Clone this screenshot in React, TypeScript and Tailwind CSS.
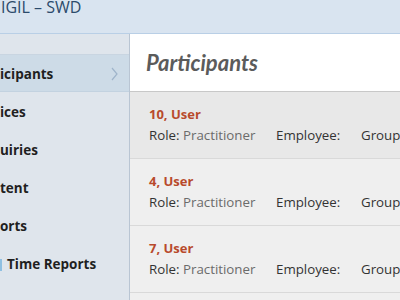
import React from 'react';

const navItems = ['ices', 'uiries', 'tent', 'orts'];

const participants = [
  { name: '10, User', active: true },
  { name: '4, User', active: false },
  { name: '7, User', active: false },
];

export default function App() {
  return (
    <div className="w-[400px] h-[300px] overflow-hidden flex flex-col bg-[#dfe5ec] font-['Open_Sans',sans-serif]">
      {/* 상단 헤더 */}
      <div className="h-[34px] shrink-0 bg-[#d9e4f0] border-b border-[#b9cfe6] overflow-hidden">
        <div className="-mt-[4px] pl-[1px] text-[16px] leading-[22px] text-[#2b4a6b]">IGIL – SWD</div>
      </div>

      <div className="flex flex-1 min-h-0">
        {/* 사이드바 */}
        <div className="w-[130px] shrink-0 bg-[#dfe5ec] border-r border-[#b9c5d3]">
          <div className="h-[21px] border-b border-[#c9d5e1]" />
          <div className="h-[37px] pt-[2px] bg-[#cddbe7] border-b border-[#c3d2e0] flex items-center justify-between pr-[11px]">
            <span className="text-[13.5px] font-bold text-[#1f1f1f]">icipants</span>
            <svg width="7" height="14" viewBox="0 0 7 14" fill="none">
              <path d="M1 1l5 6-5 6" stroke="#9fb4ca" strokeWidth="1.2" />
            </svg>
          </div>
          {navItems.map((item) => (
            <div key={item} className="h-[38px] pt-[3px] flex items-center">
              <span className="text-[13.5px] font-bold text-[#1f1f1f]">{item}</span>
            </div>
          ))}
          <div className="h-[38px] pt-[3px] flex items-center">
            <span className="w-[2px] h-[12px] bg-[#8fc0e2] mr-[5px]" />
            <span className="text-[13.5px] font-bold text-[#1f1f1f]">Time Reports</span>
          </div>
        </div>

        {/* 본문 */}
        <div className="flex-1 flex flex-col bg-[#efefef]">
          <div className="h-[58px] shrink-0 bg-white border-b border-[#c8c8c8] flex items-center pl-[16px]">
            <h1 className="font-['Lato',sans-serif] italic font-bold text-[22px] text-[#5b5b5b]">Participants</h1>
          </div>
          {participants.map((p) => (
            <div
              key={p.name}
              className={`h-[67px] shrink-0 border-b border-[#d9d9d9] pl-[19px] pt-[12px] ${
                p.active ? 'bg-[#e8e8e8]' : 'bg-[#efefef]'
              }`}
            >
              <div className="text-[13px] font-bold text-[#b84a2c] leading-[20px]">{p.name}</div>
              <div className="flex text-[13.3px] leading-[20px] mt-[1px] whitespace-nowrap">
                <span className="w-[127px] text-[#333]">
                  Role: <span className="text-[#6b6b6b]">Practitioner</span>
                </span>
                <span className="w-[85px] text-[#333]">Employee:</span>
                <span className="text-[#333]">Group</span>
              </div>
            </div>
          ))}
        </div>
      </div>
    </div>
  );
}
